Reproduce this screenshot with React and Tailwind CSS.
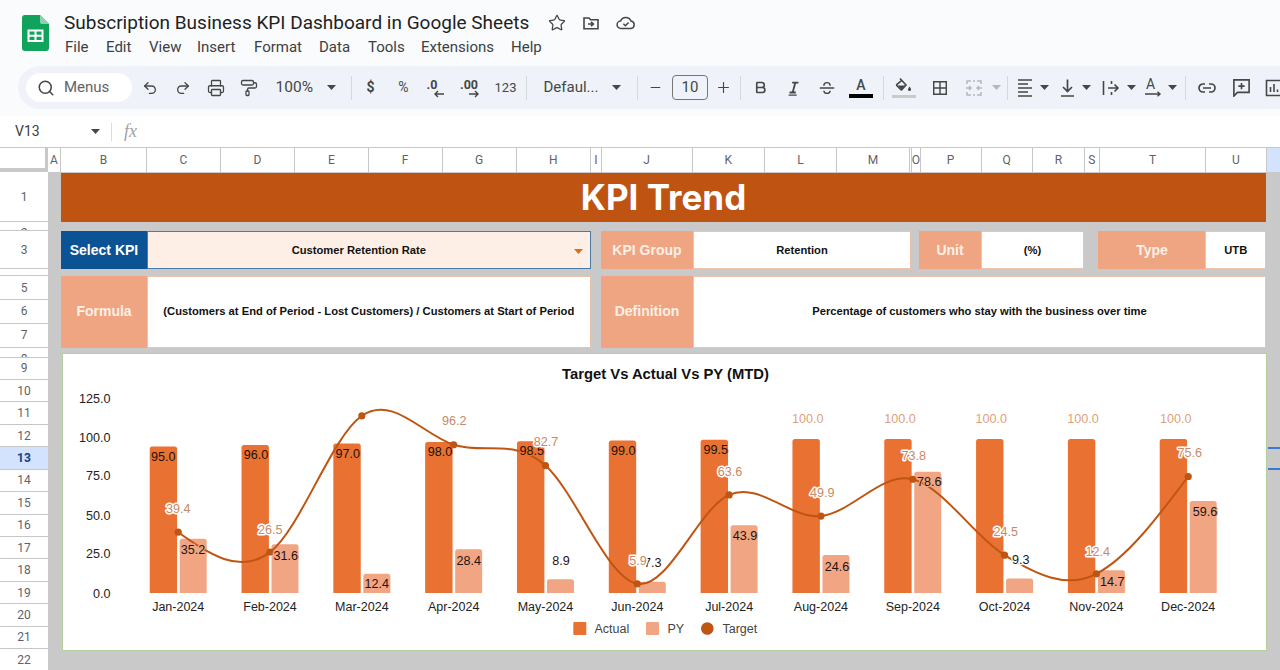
import { Bold, Minus, PaintRoller, Plus, Printer, Redo2, Search, Star, Undo2 } from "lucide-react";

const menus = [
  ["File", 65], ["Edit", 106], ["View", 149], ["Insert", 197], ["Format", 254],
  ["Data", 319], ["Tools", 368], ["Extensions", 421], ["Help", 511],
];

const columns = [
  ["A", 13], ["B", 86], ["C", 74], ["D", 74], ["E", 73.6], ["F", 74], ["G", 74], ["H", 74.6],
  ["I", 10.4], ["J", 91], ["K", 72.5], ["L", 72], ["M", 72.6], ["", 2.4], ["O", 8.6], ["P", 61],
  ["Q", 51], ["R", 52.5], ["S", 14.5], ["T", 106.7], ["U", 60.3],
];

const rows = [
  ["1", 50], ["2", 9, "clip"], ["3", 38], ["4", 7, "clip"], ["5", 24], ["6", 23.5], ["7", 24], ["8", 10, "clip"],
  ...[9, 10, 11, 12, 13, 14, 15, 16, 17, 18, 19, 20, 21, 22].map((n) => [String(n), 22.45]),
];

const months = ["Jan", "Feb", "Mar", "Apr", "May", "Jun", "Jul", "Aug", "Sep", "Oct", "Nov", "Dec"];
const actual = [95, 96, 97, 98, 98.5, 99, 99.5, 100, 100, 100, 100, 100];
const py = [35.2, 31.6, 12.4, 28.4, 8.9, 7.3, 43.9, 24.6, 78.6, 9.3, 14.7, 59.6];
const target = [39.4, 26.5, 115, 96.2, 82.7, 5.9, 63.6, 49.9, 73.8, 24.5, 12.4, 75.6];

// label centres read off the picture
const actualLabels = [[163.3, 455.7], [256, 454], [347.7, 453], [440, 451], [531.7, 450.3], [623.3, 449.7], [715.7, 449.3], [807.7, 417.7], [900, 417.7], [991.3, 417.7], [1083, 417.7], [1175.7, 417.7]];
const pyLabels = [[193, 549.3], [285.7, 555], [376.7, 583], [468.7, 559.7], [561, 559.7], [652.7, 562.3], [745, 535.3], [837, 565.7], [929.3, 481], [1020.7, 558.7], [1112.3, 581], [1205, 511]];
const targetLabels = [[178.3, 508.3], [270.3, 528.7], null, [454.3, 420.3], [546, 441], [638, 560.3], [730, 470.7], [822.3, 492.3], [913.7, 455], [1005.7, 531.3], [1097.7, 550.7], [1189.7, 451.7]];
const yTicks = [["125.0", 397.7], ["100.0", 437], ["75.0", 475.3], ["50.0", 514.7], ["25.0", 553], ["0.0", 592.5]];

const BASE = 592.4;
const SCALE = 1.54;
const barX = (i) => 149.7 + 91.82 * i;
const barY = (v) => BASE - v * SCALE;

const topRounded = (x, w, y) =>
  `M${x} ${BASE}V${y + 2.5}Q${x} ${y} ${x + 2.5} ${y}H${x + w - 2.5}Q${x + w} ${y} ${x + w} ${y + 2.5}V${BASE}Z`;

// hermite curve through the target points, slopes a bit steeper than catmull-rom
function curvePath(pts) {
  const n = pts.length - 1;
  const h = 91.82;
  const m = pts.map((p, i) => (i === 0 || i === n ? 0 : (1.2 * (pts[i + 1][1] - pts[i - 1][1])) / 2));
  m[0] = 1.5 * (pts[1][1] - pts[0][1]) - m[1] / 2;
  m[n] = 1.5 * (pts[n][1] - pts[n - 1][1]) - m[n - 1] / 2;
  let d = `M${pts[0][0]} ${pts[0][1]}`;
  for (let i = 0; i < n; i++) {
    d += `C${pts[i][0] + h / 3} ${pts[i][1] + m[i] / 3} ${pts[i + 1][0] - h / 3} ${pts[i + 1][1] - m[i + 1] / 3} ${pts[i + 1][0]} ${pts[i + 1][1]}`;
  }
  return d;
}

const Caret = ({ className = "", color = "#444746" }) => (
  <svg width="9" height="5" viewBox="0 0 9 5" className={`shrink-0 ${className}`}>
    <path d="M0 0h9L4.5 5z" fill={color} />
  </svg>
);

const Divider = ({ className = "" }) => <div className={`w-px h-[24px] shrink-0 bg-[#d5d9dd] ${className}`} />;

const Ico = ({ children, w = 20, h = 20 }) => (
  <svg width={w} height={h} viewBox="0 0 20 20" fill="none" stroke="#444746" strokeWidth="1.6">
    {children}
  </svg>
);

const Btn = ({ w = "w-[33px]", children }) => (
  <div className={`${w} h-full flex items-center justify-center shrink-0`}>{children}</div>
);

function SheetsLogo() {
  return (
    <svg width="27" height="36" viewBox="0 0 27 36">
      <path d="M3 0h15l9 9v24a3 3 0 0 1-3 3H3a3 3 0 0 1-3-3V3a3 3 0 0 1 3-3z" fill="#0fa35b" />
      <path d="M18 0l9 9h-7a2 2 0 0 1-2-2z" fill="#8ed1ae" />
      <path d="M6.5 15.5h14v10.5h-14z M13.5 15.5v10.5 M6.5 20.7h14" fill="none" stroke="#fff" strokeWidth="2" />
    </svg>
  );
}

function Header() {
  return (
    <div className="relative h-[66px] shrink-0 flex">
      <div className="ml-[22px] mt-[15px]"><SheetsLogo /></div>
      <div className="ml-[15px] flex flex-col">
        <div className="mt-[8px] h-[28px] flex items-center text-[19px] leading-none text-[#1f1f1f] font-['Roboto',sans-serif] whitespace-nowrap">
          Subscription Business KPI Dashboard in Google Sheets
        </div>
        <div className="mt-[2px] ml-[1px] flex text-[15px] leading-[18px] text-[#3c4043] font-['Roboto',sans-serif]">
          {menus.map(([m, x], i) => (
            <span key={m} style={{ marginLeft: i === 0 ? 0 : x - menus[i - 1][1] }} className="w-0 whitespace-nowrap">{m}</span>
          ))}
        </div>
      </div>
      <div className="absolute left-[548px] top-[14px] flex items-center gap-[16px]">
        <Star size={18} strokeWidth={1.7} color="#444746" />
        <svg width="18" height="18" viewBox="0 0 18 18" fill="none" stroke="#444746" strokeWidth="1.6">
          <path d="M2 4h5l1.5 1.7H16v9H2z" />
          <path d="M6 10h5M9 7.8l2.4 2.2L9 12.2" />
        </svg>
        <svg width="20" height="18" viewBox="0 0 20 18" fill="none" stroke="#444746" strokeWidth="1.5">
          <path d="M5 14.5a3.7 3.7 0 0 1-.4-7.4A5.6 5.6 0 0 1 15 7a3.8 3.8 0 0 1 0 7.5z" />
          <path d="M7.4 9.8l2 1.9 3.2-3.3" />
        </svg>
      </div>
    </div>
  );
}

function Toolbar() {
  return (
    <div className="ml-[18px] h-[43px] shrink-0 rounded-l-[22px] bg-[#eff3f9] flex items-center font-['Roboto',sans-serif] text-[#444746] overflow-hidden">
      <div className="ml-[8px] w-[106px] h-[29px] rounded-full bg-white flex items-center shrink-0">
        <Search size={18} strokeWidth={2} color="#444746" className="ml-[11px]" />
        <span className="ml-[9px] text-[15px] text-[#5f6368]">Menus</span>
      </div>
      <div className="w-[1.5px] shrink-0" />
      <Btn><Undo2 size={16} strokeWidth={2} color="#444746" /></Btn>
      <Btn><Redo2 size={16} strokeWidth={2} color="#444746" /></Btn>
      <Btn><Printer size={18} strokeWidth={1.7} color="#444746" /></Btn>
      <Btn><PaintRoller size={18} strokeWidth={1.7} color="#444746" /></Btn>
      <div className="w-[85px] h-full flex items-center shrink-0">
        <span className="ml-[10px] text-[15.5px]">100%</span>
        <Caret className="ml-[14px]" />
      </div>
      <Divider />
      <div className="w-[2.5px] shrink-0" />
      <Btn><span className="text-[14px] font-bold">$</span></Btn>
      <Btn><span className="text-[14px]">%</span></Btn>
      <Btn>
        <div className="relative w-[20px] h-[22px]">
          <span className="absolute left-0 top-[1px] text-[12.5px] font-bold leading-[14px]">.0</span>
          <svg className="absolute left-[6px] top-[13px]" width="12" height="8" viewBox="0 0 12 8" fill="none" stroke="#444746" strokeWidth="1.4"><path d="M11 4H2M5 1L2 4l3 3" /></svg>
        </div>
      </Btn>
      <Btn>
        <div className="relative w-[22px] h-[22px] ml-[3px]">
          <span className="absolute left-0 top-[1px] text-[12.5px] font-bold leading-[14px]">.00</span>
          <svg className="absolute left-[8px] top-[13px]" width="12" height="8" viewBox="0 0 12 8" fill="none" stroke="#444746" strokeWidth="1.4"><path d="M1 4h9M7 1l3 3-3 3" /></svg>
        </div>
      </Btn>
      <Btn w="w-[39px]"><span className="text-[13px]">123</span></Btn>
      <Divider className="ml-[1px]" />
      <div className="w-[110px] h-full flex items-center shrink-0">
        <span className="ml-[16.5px] text-[15px]">Defaul...</span>
        <Caret className="ml-[14px]" />
      </div>
      <Divider />
      <div className="w-[1px] shrink-0" />
      <Btn><Minus size={15} strokeWidth={1.6} color="#444746" /></Btn>
      <div className="w-[36px] h-[25px] rounded-[4px] border border-[#747775] flex items-center justify-center text-[15px] shrink-0">10</div>
      <Btn w="w-[30px]"><Plus size={17} strokeWidth={1.6} color="#444746" /></Btn>
      <Divider className="ml-[2px]" />
      <div className="w-[3px] shrink-0" />
      <Btn><Bold size={15} strokeWidth={2.6} color="#444746" /></Btn>
      <Btn>
        <Ico w={18} h={18}>
          <path d="M8 4h7M5 15h7M11.5 4l-3 11" strokeWidth="2" />
          <path d="M4 18h9" strokeWidth="1.4" />
        </Ico>
      </Btn>
      <Btn>
        <Ico w={18} h={18}>
          <path d="M2 10h16" />
          <path d="M6.5 7.5C6.5 5 8 4 10 4s3.5 1 3.5 3.5M6.5 13c.2 2 1.5 3 3.5 3s3.3-1 3.5-3" />
        </Ico>
      </Btn>
      <Btn w="w-[36px]">
        <div className="flex flex-col items-center">
          <span className="text-[14px] leading-[14px] font-medium">A</span>
          <div className="mt-[2px] w-[24px] h-[4px] bg-black" />
        </div>
      </Btn>
      <Divider className="ml-[4px]" />
      <Btn w="w-[40px]">
        <div className="flex flex-col items-center">
          <svg width="18" height="15" viewBox="0 0 18 15">
            <path d="M5 0.5l6 6.5-4 4.5a1 1 0 0 1-1.4 0L2 7.8a1 1 0 0 1 0-1.4L6.5 2.6" fill="none" stroke="#444746" strokeWidth="1.6" />
            <path d="M2.5 7.5h8L6.5 11.5z" fill="#444746" />
            <path d="M14.5 8.5c1 1.4 1.5 2.2 1.5 3a1.5 1.5 0 0 1-3 0c0-.8.5-1.6 1.5-3z" fill="#444746" />
          </svg>
          <div className="mt-[2px] w-[24px] h-[3px] bg-[#c8cacb]" />
        </div>
      </Btn>
      <Btn w="w-[31px]">
        <Ico w={18} h={18}><path d="M3 3h14v14H3zM10 3v14M3 10h14" /></Ico>
      </Btn>
      <Btn w="w-[37px]">
        <svg width="18" height="18" viewBox="0 0 18 18" fill="none" stroke="#b4b8bc" strokeWidth="1.5">
          <path d="M6 2H2v3M12 2h4v3M6 16H2v-3M12 16h4v-3M1 9h5M4 7l2 2-2 2M17 9h-5M14 7l-2 2 2 2M8 2h2M8 16h2" />
        </svg>
      </Btn>
      <Caret color="#b4b8bc" />
      <div className="w-[6px] shrink-0" />
      <Divider />
      <div className="w-[9px] shrink-0" />
      <div className="w-[33px] h-full flex items-center shrink-0">
        <svg width="16" height="20" viewBox="0 0 16 20" fill="none" stroke="#444746" strokeWidth="1.6" className="shrink-0"><path d="M1 2h14M1 6h10M1 10h14M1 14h10M1 18h14" /></svg>
        <Caret className="ml-[6.5px]" />
      </div>
      <div className="w-[10px] shrink-0" />
      <div className="w-[33px] h-full flex items-center shrink-0">
        <svg width="15" height="20" viewBox="0 0 15 20" fill="none" stroke="#444746" strokeWidth="1.7" className="shrink-0"><path d="M7.5 1.5V13M3 9l4.5 4.5L12 9M1 18h13" /></svg>
        <Caret className="ml-[7px]" />
      </div>
      <div className="w-[9px] shrink-0" />
      <div className="w-[33px] h-full flex items-center shrink-0">
        <svg width="18" height="20" viewBox="0 0 18 20" fill="none" stroke="#444746" strokeWidth="1.6" className="shrink-0"><path d="M1.5 3v14M9.5 3v3M9.5 14v3M6 10h10M12.5 6.5L16 10l-3.5 3.5" /></svg>
        <Caret className="ml-[6.5px]" />
      </div>
      <div className="w-[10px] shrink-0" />
      <div className="w-[33px] h-full flex items-center shrink-0">
        <div className="relative w-[17px] h-[22px] shrink-0">
          <span className="absolute left-[1px] top-0 text-[14px] leading-[14px]">A</span>
          <svg className="absolute left-0 top-[14px]" width="17" height="8" viewBox="0 0 17 8" fill="none" stroke="#444746" strokeWidth="1.4"><path d="M0 3h15M12.5 .8L15 3l-2.5 2.2" /></svg>
        </div>
        <Caret className="ml-[6px]" />
      </div>
      <div className="w-[6.5px] shrink-0" />
      <Divider />
      <div className="w-[4px] shrink-0" />
      <Btn w="w-[35px]">
        <svg width="20" height="12" viewBox="0 0 20 12" fill="none" stroke="#444746" strokeWidth="1.7">
          <path d="M8 2H6a4 4 0 0 0 0 8h2M12 2h2a4 4 0 0 1 0 8h-2M6 6h8" />
        </svg>
      </Btn>
      <Btn w="w-[33px]">
        <svg width="17" height="19" viewBox="0 0 19 21" fill="none" stroke="#444746" strokeWidth="1.8">
          <path d="M1 2h17v14H5l-4 4zM9.5 5.5v7M6 9h7" />
        </svg>
      </Btn>
      <Btn w="w-[33px]">
        <svg width="18" height="18" viewBox="0 0 18 18" fill="none" stroke="#444746" strokeWidth="1.6">
          <path d="M1.5 1.5h15v15h-15zM5.5 8v5M9 5v8M12.5 10.5V13" />
        </svg>
      </Btn>
    </div>
  );
}

function FormulaBar() {
  return (
    <div className="h-[32px] mt-[7px] shrink-0 bg-white border-b border-[#c7c7c7] flex items-center font-['Roboto',sans-serif]">
      <span className="ml-[15px] w-[76px] text-[14px] text-[#3c4043]">V13</span>
      <Caret />
      <div className="ml-[11px] w-px h-[18px] bg-[#dadce0]" />
      <span className="ml-[12px] text-[18px] italic text-[#a0a3a6] font-['Liberation_Serif',serif]">fx</span>
    </div>
  );
}

function ColumnHeaders() {
  return (
    <div className="h-[24px] shrink-0 flex bg-white text-[12px] text-[#5f6368] font-['Roboto',sans-serif]">
      <div className="w-[48px] shrink-0 bg-white border-r-[3px] border-b-[4px] border-[#c8c8c8]" />
      {columns.map(([c, w], i) => (
        <div key={i} style={{ width: w }} className="shrink-0 flex items-center justify-center border-r border-[#c7c7c7] overflow-hidden">
          {c}
        </div>
      ))}
      <div className="flex-1 bg-[#d3e3fd]" />
    </div>
  );
}

function RowHeaders() {
  return (
    <div className="w-[48px] shrink-0 bg-white overflow-hidden text-[12px] text-[#5f6368] font-['Roboto',sans-serif]">
      {rows.map(([r, h, clip]) => (
        <div
          key={r}
          style={{ height: h }}
          className={`flex justify-center border-b border-[#c7c7c7] overflow-hidden ${clip ? "items-start pt-[4px] leading-[14px]" : "items-center"} ${r === "13" ? "bg-[#d3e3fd] text-[#0b3f8a] font-bold" : ""}`}
        >
          {r}
        </div>
      ))}
    </div>
  );
}

function Chart() {
  const points = target.map((v, i) => [barX(i) + 28.5, barY(v)]);
  return (
    <svg viewBox="63 353.5 1203 296" className="w-full h-full block" fontFamily="'Liberation Sans', Arial, sans-serif">
      <text x="665.5" y="378.5" textAnchor="middle" fontSize="14.8" fontWeight="700" fill="#111">Target Vs Actual Vs PY (MTD)</text>

      {yTicks.map(([t, y]) => (
        <text key={t} x="110.5" y={y + 4.5} textAnchor="end" fontSize="12.6" fill="#222">{t}</text>
      ))}

      {months.map((m, i) => {
        const x = barX(i);
        return (
          <g key={m}>
            <path d={topRounded(x, 27.4, barY(actual[i]))} fill="#e97132" />
            <path d={topRounded(x + 30, 27, barY(py[i]))} fill="#f1a582" />
            <text x={x + 28.5} y="610" textAnchor="middle" fontSize="12.5" fill="#222">{m}-2024</text>
          </g>
        );
      })}

      <path d={curvePath(points)} fill="none" stroke="#bf5513" strokeWidth="2" />
      {points.map(([x, y], i) => <circle key={i} cx={x} cy={y} r="3.6" fill="#bf5513" />)}

      {actual.map((v, i) => {
        const [x, y] = actualLabels[i];
        return v === 100 ? (
          <text key={i} x={x} y={y + 4.5} textAnchor="middle" fontSize="12.6" fill="#dd9f7d">100.0</text>
        ) : (
          <text key={i} x={x} y={y + 4.5} textAnchor="middle" fontSize="12.6" fill="#1c1208" stroke="#e97132" strokeWidth="2" paintOrder="stroke">{v.toFixed(1)}</text>
        );
      })}

      {py.map((v, i) => {
        const [x, y] = pyLabels[i];
        const above = i === 4 || i === 5 || i === 9;
        return (
          <text key={i} x={x} y={y + 4.5} textAnchor="middle" fontSize="12.6" fill="#1c1410" stroke={above ? "#ffffff" : "#f1a582"} strokeWidth="2.5" paintOrder="stroke">{v.toFixed(1)}</text>
        );
      })}

      {target.map((v, i) => {
        if (!targetLabels[i]) return null;
        const [x, y] = targetLabels[i];
        return (
          <text key={i} x={x} y={y + 4.5} textAnchor="middle" fontSize="12.6" fill="#c78a64" stroke="#ffffff" strokeWidth="3" strokeLinejoin="round" paintOrder="stroke">{v.toFixed(1)}</text>
        );
      })}

      <rect x="573.3" y="621.5" width="13" height="13" rx="1" fill="#e97132" />
      <text x="594.5" y="632.5" fontSize="12.5" fill="#444">Actual</text>
      <rect x="646" y="621.5" width="13" height="13" rx="1" fill="#f1a582" />
      <text x="667.5" y="632.5" fontSize="12.5" fill="#444">PY</text>
      <circle cx="707.3" cy="628" r="6.3" fill="#bf5513" />
      <text x="722.5" y="632.5" fontSize="12.5" fill="#444">Target</text>
    </svg>
  );
}

const Label = ({ w, children, className = "bg-[#f0a582] text-[#fcefe6]" }) => (
  <div style={{ width: w }} className={`shrink-0 h-full flex items-center justify-center text-[14px] font-bold ${className}`}>
    {children}
  </div>
);

const Value = ({ w, children }) => (
  <div style={{ width: w }} className="shrink-0 h-full flex items-center justify-center bg-white border border-[#ecc4ae] text-[11.2px] font-bold text-[#111] whitespace-nowrap">
    {children}
  </div>
);

function Sheet() {
  return (
    <div className="relative flex-1 bg-[#c9c9c9] pl-[13px] pt-[1px] font-['Liberation_Sans',Arial,sans-serif] overflow-hidden">
      <div className="w-[1205px] h-[49px] bg-[#bf5312] flex items-center justify-center text-white text-[35px] font-bold font-['Inter',sans-serif] leading-none">
        KPI Trend
      </div>

      <div className="mt-[9px] h-[38px] flex w-[1205px]">
        <Label w={86} className="bg-[#0b5394] text-white">Select KPI</Label>
        <div className="relative w-[443.6px] h-full shrink-0 flex items-center justify-center pr-[20px] bg-[#fdefe6] border border-[#4a7ba7] text-[11.2px] font-bold text-[#111]">
          Customer Retention Rate
          <Caret className="absolute right-[7px] top-[17px]" color="#e06a1f" />
        </div>
        <div className="w-[10.4px] shrink-0" />
        <Label w={92}>KPI Group</Label>
        <Value w={218}>Retention</Value>
        <div className="w-[8px] shrink-0" />
        <Label w={62}>Unit</Label>
        <Value w={103}>(%)</Value>
        <div className="w-[14.5px] shrink-0" />
        <Label w={107}>Type</Label>
        <Value w={60.5}>UTB</Value>
      </div>

      <div className="mt-[7px] h-[71.5px] flex w-[1205px]">
        <Label w={86}>Formula</Label>
        <Value w={443.6}>(Customers at End of Period - Lost Customers) / Customers at Start of Period</Value>
        <div className="w-[10.4px] shrink-0" />
        <Label w={92}>Definition</Label>
        <Value w={573}>Percentage of customers who stay with the business over time</Value>
      </div>

      <div className="mt-[5px] ml-[1px] w-[1205px] h-[298px] bg-white border border-[#b4cf9e]">
        <Chart />
      </div>

      <div className="absolute left-[1220px] right-0 top-[275px] h-[23px] border-y-2 border-[#3b78d8]" />
    </div>
  );
}

export default function App() {
  return (
    <div className="w-[1280px] h-[670px] overflow-hidden bg-[#f9fbfd] flex flex-col">
      <Header />
      <Toolbar />
      <FormulaBar />
      <ColumnHeaders />
      <div className="flex-1 flex min-h-0">
        <RowHeaders />
        <Sheet />
      </div>
    </div>
  );
}
